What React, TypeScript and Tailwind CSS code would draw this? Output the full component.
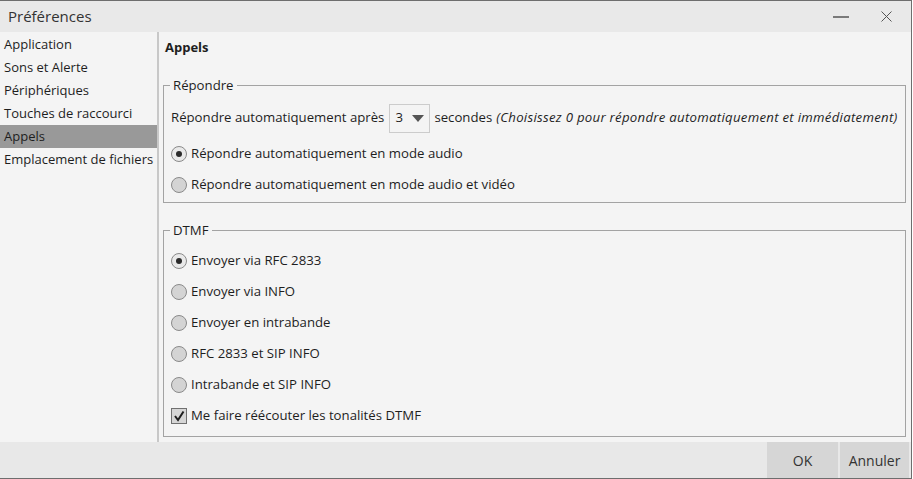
import React from 'react'

const navItems = [
  'Application',
  'Sons et Alerte',
  'Périphériques',
  'Touches de raccourci',
  'Appels',
  'Emplacement de fichiers',
]

function Radio({ checked, label }: { checked?: boolean; label: string }) {
  return (
    <div className="flex items-center h-[31px]">
      <span
        className={
          checked
            ? 'w-[16px] h-[16px] rounded-full border border-[#8a8a8a] bg-[#e9e9e9] flex items-center justify-center'
            : 'w-[16px] h-[16px] rounded-full border border-[#8a8a8a] bg-[#d4d4d4] flex items-center justify-center'
        }
      >
        {checked && <span className="w-[6px] h-[6px] rounded-full bg-[#2b2b2b]" />}
      </span>
      <span className="ml-[4px]">{label}</span>
    </div>
  )
}

export default function App() {
  return (
    <div className="w-[913px] h-[479px] bg-white font-['Open_Sans',sans-serif] text-[13.2px] text-[#1e1e1e]">
      <div className="w-[912px] h-[479px] flex flex-col border-t border-r border-b border-[#6e6e6e] bg-[#f4f4f4]">
        {/* title bar */}
        <div className="h-[31px] flex items-center bg-[#e9e9e9] shrink-0">
          <span className="ml-[8px] text-[15px] text-[#333]">Préférences</span>
          <div className="ml-auto flex items-center">
            <span className="w-[16px] h-[2px] bg-[#7a7a7a] mr-[32px]" />
            <svg width="11" height="11" viewBox="0 0 11 11" className="mr-[19px]">
              <path d="M0.5 0.5 L10.5 10.5 M10.5 0.5 L0.5 10.5" stroke="#555" strokeWidth="1" />
            </svg>
          </div>
        </div>

        {/* body */}
        <div className="flex flex-1 min-h-0">
          <div className="w-[157px] pt-[1px] shrink-0 text-[13px]">
            {navItems.map((item) => (
              <div
                key={item}
                className={
                  item === 'Appels'
                    ? 'h-[23px] flex items-center pl-[4px] bg-[#999999]'
                    : 'h-[23px] flex items-center pl-[4px]'
                }
              >
                {item}
              </div>
            ))}
          </div>
          <div className="w-[2px] bg-[#c8c8c8] shrink-0" />

          <div className="flex-1 pl-[4px] pr-[5px]">
            <div className="h-[31px] flex items-center pl-[2px] font-bold text-[13px]">Appels</div>

            <fieldset className="mt-[12px] border border-[#a3a3a3] pl-[7px] pb-[2px]">
              <legend className="ml-[-1px] px-[3px] leading-[20px]">Répondre</legend>
              <div className="mt-[9px] h-[28px] flex items-center">
                <span>Répondre automatiquement après</span>
                <div className="ml-[5px] w-[41px] h-[29px] border border-[#cccccc] bg-[#f4f4f4] flex items-center pl-[5px]">
                  <span>3</span>
                  <svg width="12" height="7" viewBox="0 0 12 7" className="ml-[9px]">
                    <path d="M0 0 L12 0 L6 7 Z" fill="#555" />
                  </svg>
                </div>
                <span className="ml-[4px]">secondes</span>
                <span className="ml-[4px] italic tracking-[0.28px]">(Choisissez 0 pour répondre automatiquement et immédiatement)</span>
              </div>
              <div className="mt-[6px]">
                <Radio checked label="Répondre automatiquement en mode audio" />
                <Radio label="Répondre automatiquement en mode audio et vidéo" />
              </div>
            </fieldset>

            <fieldset className="mt-[17px] border border-[#a3a3a3] pl-[7px] pb-[5px]">
              <legend className="ml-[-1px] px-[3px] leading-[20px]">DTMF</legend>
              <div className="mt-[5px]">
                <Radio checked label="Envoyer via RFC 2833" />
                <Radio label="Envoyer via INFO" />
                <Radio label="Envoyer en intrabande" />
                <Radio label="RFC 2833 et SIP INFO" />
                <Radio label="Intrabande et SIP INFO" />
                <div className="flex items-center h-[31px]">
                  <span className="w-[16px] h-[16px] border border-[#707070] bg-[#d6d6d6] flex items-center justify-center">
                    <svg width="12" height="12" viewBox="0 0 12 12">
                      <path d="M2 6 L5 10 L10.5 1.5" stroke="#1e1e1e" strokeWidth="2" fill="none" />
                    </svg>
                  </span>
                  <span className="ml-[4px]">Me faire réécouter les tonalités DTMF</span>
                </div>
              </div>
            </fieldset>
          </div>
        </div>

        {/* footer */}
        <div className="h-[36px] shrink-0 bg-[#e8e8e8] flex justify-end pr-[2px]">
          <button className="w-[71px] h-full bg-[#d6d6d6] text-[14px] text-[#333]">OK</button>
          <button className="ml-[2px] w-[69px] h-full bg-[#d6d6d6] text-[14px] text-[#333]">Annuler</button>
        </div>
      </div>
    </div>
  )
}
